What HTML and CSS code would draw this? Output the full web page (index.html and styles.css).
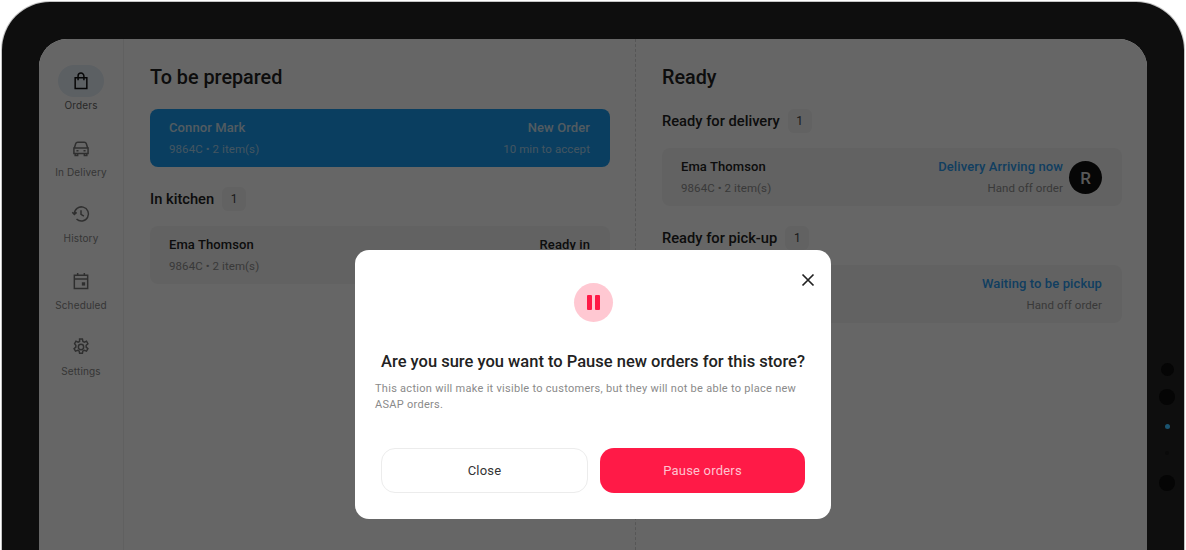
FILE: index.html
```html
<!DOCTYPE html>
<html lang="en">
<head>
<meta charset="utf-8">
<title>Orders</title>
<link rel="stylesheet" href="styles.css">
</head>
<body>
<div class="device">
  <div class="screen">
    <nav class="rail">
      <a class="rail-item active">
        <span class="rail-icon"><svg viewBox="0 0 24 24" width="20" height="20"><path d="M5 8h14v13H5zM8.500 11V6a3.500 3.500 0 0 1 7 0v5"/></svg></span>
        <span>Orders</span>
      </a>
      <a class="rail-item">
        <span class="rail-icon"><svg viewBox="0 0 24 24" width="20" height="20"><path d="M4 12l1.600-5.200A2.500 2.500 0 0 1 8 5h8a2.500 2.500 0 0 1 2.400 1.800L20 12M3.500 12h17v6.500h-17zM5 18.500V21h3v-2.500M16 18.500V21h3v-2.500M6.500 15.200h2.500M15 15.200h2.500"/></svg></span>
        <span>In Delivery</span>
      </a>
      <a class="rail-item">
        <span class="rail-icon"><svg viewBox="0 0 24 24" width="20" height="20"><path d="M4 12a8.500 8.500 0 1 1 2.600 6.100M1.500 9.800 4 12.500l2.800-2.500M12 7.500V12.500l3.500 2"/></svg></span>
        <span>History</span>
      </a>
      <a class="rail-item">
        <span class="rail-icon"><svg viewBox="0 0 24 24" width="20" height="20"><path d="M4 5h16v16H4zM4 9.500h16M8 2.500V6M16 2.500V6"/><rect class="solid" x="13" y="13.500" width="4" height="4"/></svg></span>
        <span>Scheduled</span>
      </a>
      <a class="rail-item">
        <span class="rail-icon"><svg viewBox="0 0 24 24" width="20" height="20"><circle cx="12" cy="12" r="3.200"/><path d="M10.300 2.500h3.400l.6 2.800 1.700.8 2.600-1 1.700 3-2.100 1.800v2.200l2.100 1.800-1.700 3-2.600-1-1.700.8-.6 2.800h-3.400l-.6-2.800-1.700-.8-2.600 1-1.700-3 2.100-1.800v-2.200L4.300 8.100l1.700-3 2.600 1 1.700-.8z"/></svg></span>
        <span>Settings</span>
      </a>
    </nav>

    <main class="board">
      <section class="column column-left">
        <h1 class="column-title">To be prepared</h1>
        <article class="order order-new">
          <div class="order-main">
            <div class="order-name">Connor Mark</div>
            <div class="order-meta">9864C • 2 item(s)</div>
          </div>
          <div class="order-side">
            <div class="order-name">New Order</div>
            <div class="order-meta">10 min to accept</div>
          </div>
        </article>
        <h2 class="group-title">In kitchen <span class="count">1</span></h2>
        <article class="order">
          <div class="order-main">
            <div class="order-name">Ema Thomson</div>
            <div class="order-meta">9864C • 2 item(s)</div>
          </div>
          <div class="order-side">
            <div class="order-name">Ready in</div>
            <div class="order-meta">10 min</div>
          </div>
        </article>
      </section>

      <section class="column column-right">
        <h1 class="column-title">Ready</h1>
        <h2 class="group-title group-first">Ready for delivery <span class="count">1</span></h2>
        <article class="order">
          <div class="order-main">
            <div class="order-name">Ema Thomson</div>
            <div class="order-meta">9864C • 2 item(s)</div>
          </div>
          <div class="order-side">
            <div class="order-name link">Delivery Arriving now</div>
            <div class="order-meta">Hand off order</div>
          </div>
          <span class="avatar">R</span>
        </article>
        <h2 class="group-title">Ready for pick-up <span class="count">1</span></h2>
        <article class="order">
          <div class="order-main">
            <div class="order-name">Ema Thomson</div>
            <div class="order-meta">9864C • 2 item(s)</div>
          </div>
          <div class="order-side">
            <div class="order-name link">Waiting to be pickup</div>
            <div class="order-meta">Hand off order</div>
          </div>
        </article>
      </section>
    </main>

    <div class="scrim"></div>
  </div>

  <div class="sensors">
    <span class="sensor s-a"></span>
    <span class="sensor s-b"></span>
    <span class="sensor s-led"></span>
    <span class="sensor s-dot"></span>
    <span class="sensor s-c"></span>
  </div>
</div>

<div class="modal" role="dialog">
  <button class="modal-close" aria-label="Close"><svg viewBox="0 0 14 14" width="14" height="14"><path d="M1.500 1.500l11 11M12.500 1.500l-11 11"/></svg></button>
  <div class="modal-badge"><span class="pause-bar"></span><span class="pause-bar"></span></div>
  <h3 class="modal-title">Are you sure you want to Pause new orders for this store?</h3>
  <p class="modal-text">This action will make it visible to customers, but they will not be able to place new ASAP orders.</p>
  <div class="modal-actions">
    <button class="btn btn-ghost">Close</button>
    <button class="btn btn-danger">Pause orders</button>
  </div>
</div>
</body>
</html>
```
FILE: styles.css
```css
* { box-sizing: border-box; }
html, body { margin: 0; height: 550px; overflow: hidden; background: #fff; }
body { font-family: Roboto, "Liberation Sans", sans-serif; position: relative; }

.device {
  margin: 2px 2px 0;
  height: 548px;
  padding: 37px 37px 0;
  background: #0e0e0e;
  border-radius: 48px 48px 0 0;
  box-shadow: 0 0 0 1px #c4c4c4;
  display: flex;
  position: relative;
}
.screen {
  flex: 1;
  display: flex;
  background: #fff;
  border-radius: 28px 28px 0 0;
  overflow: hidden;
  position: relative;
}
.scrim { position: absolute; inset: 0; background: rgba(0,0,0,.6); }

.rail {
  width: 85px;
  flex: none;
  border-right: 1px solid #f0f0f0;
  display: flex;
  flex-direction: column;
  align-items: center;
  padding-top: 26px;
  gap: 19.500px;
}
.rail-item {
  display: flex;
  flex-direction: column;
  align-items: center;
  gap: 1px;
  width: 60px;
  font: 400 10px/14px Inter, Lato, sans-serif;
  letter-spacing: .15px;
  color: #888;
}
.rail-item.active { color: #666; }
.rail-icon {
  width: 46px;
  height: 32px;
  border-radius: 16px;
  display: flex;
  align-items: center;
  justify-content: center;
}
.active .rail-icon { background: #e6eff8; }
.rail-icon svg { fill: none; stroke: #777; stroke-width: 1.800; }
.active .rail-icon svg { stroke: #111; }
.rail-icon .solid { fill: #777; stroke: none; }

.board { flex: 1; display: flex; min-width: 0; }
.column { flex: 1; min-width: 0; }
.column-left { flex: 0 0 512px; padding: 27px 25px 0 26px; border-right: 1px dashed #d8d8d8; }
.column-right { padding: 27px 25px 0 26px; }

.column-title { margin: 0; font-size: 19.800px; line-height: 24px; font-weight: 500; color: #222; }
.group-title {
  margin: 20px 0 0;
  font-size: 14.700px;
  line-height: 22px;
  font-weight: 500;
  color: #222;
  display: flex;
  align-items: center;
  gap: 8px;
}
.group-first { margin-top: 19px; }
.count {
  width: 24px;
  height: 24px;
  border-radius: 6px;
  background: #f5f5f5;
  display: inline-flex;
  align-items: center;
  justify-content: center;
  font-size: 12px;
  font-weight: 400;
  color: #444;
}

.order {
  margin-top: 15px;
  height: 58px;
  padding: 1px 20px 0 19px;
  border-radius: 8px;
  background: #f5f5f5;
  display: flex;
  align-items: center;
  gap: 6px;
}
.column-title + .order { margin-top: 19px; }
.order-main { flex: 1; }
.order-side { text-align: right; }
.order-name { font-size: 13px; line-height: 16px; font-weight: 500; color: #222; letter-spacing: .1px; }
.order-meta { margin-top: 5px; font-size: 11.500px; line-height: 16px; color: #909090; letter-spacing: .08px; }
.order-new { background: #1a9bf0; }
.order-new .order-name { color: #cde3f2; }
.order-new .order-meta { color: #a8d4f0; }
.link { color: #2b9cf0; }
.avatar {
  width: 33px;
  height: 33px;
  border-radius: 50%;
  background: #111;
  color: #ddd;
  flex: none;
  display: flex;
  align-items: center;
  justify-content: center;
  font-size: 17px;
  font-weight: 500;
}

.sensors {
  position: absolute;
  top: 361px;
  right: 8.500px;
  width: 17px;
  display: flex;
  flex-direction: column;
  align-items: center;
}
.sensor { border-radius: 50%; background: #050505; flex: none; }
.s-a { width: 13px; height: 13px; }
.s-b { width: 16px; height: 16px; margin-top: 13px; }
.s-led { width: 5px; height: 5px; margin-top: 19px; background: #1b5470; }
.s-dot { width: 4px; height: 4px; margin-top: 22px; background: #0a0a0a; }
.s-c { width: 16px; height: 16px; margin-top: 20px; }

.modal {
  position: absolute;
  left: 355px;
  top: 250px;
  width: 476px;
  height: 269px;
  background: #fff;
  border-radius: 14px;
  padding: 33px 26px 0;
  display: flex;
  flex-direction: column;
  align-items: center;
}
.modal-close {
  position: absolute;
  top: 23px;
  right: 16px;
  width: 14px;
  height: 14px;
  padding: 0;
  border: 0;
  background: none;
  display: flex;
}
.modal-close svg { fill: none; stroke: #222; stroke-width: 1.700; }
.modal-badge {
  width: 39px;
  height: 39px;
  border-radius: 50%;
  background: #ffc8d2;
  display: flex;
  align-items: center;
  justify-content: center;
  gap: 3px;
  flex: none;
}
.pause-bar { width: 5px; height: 15px; background: #ff1a47; border-radius: 1px; }
.modal-title {
  margin: 29px 0 0;
  font-size: 16.500px;
  line-height: 22px;
  font-weight: 500;
  color: #222;
  white-space: nowrap;
}
.modal-text {
  margin: 8px -6px 0;
  font-size: 11px;
  line-height: 16px;
  color: #8a8a8a;
  letter-spacing: .28px;
  align-self: stretch;
}
.modal-actions { margin-top: 35px; display: flex; gap: 12px; align-self: stretch; }
.btn {
  flex: 1;
  height: 45px;
  border-radius: 14px;
  font: 400 13px Roboto, sans-serif;
  letter-spacing: .2px;
}
.btn-ghost { background: #fff; border: 1px solid #ececec; color: #333; }
.btn-danger { background: #ff1a47; border: 0; color: #ffc2cf; }
```
